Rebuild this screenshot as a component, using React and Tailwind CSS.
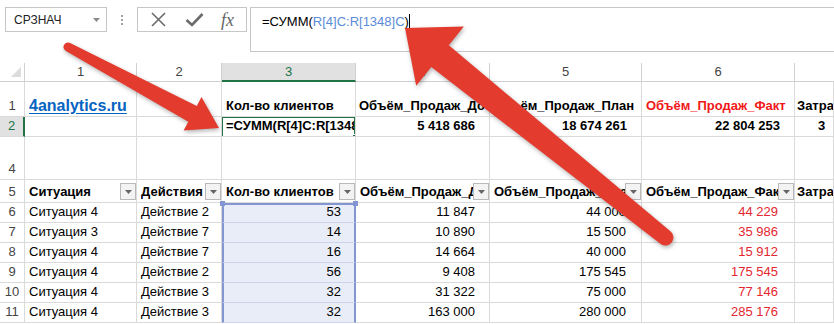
import React from 'react'

/* строки данных таблицы */
const ROWS = [
  ['6', 'Ситуация 4', 'Действие 2', '53', '11 847', '44 000', '44 229'],
  ['7', 'Ситуация 3', 'Действие 7', '14', '10 890', '15 500', '35 986'],
  ['8', 'Ситуация 4', 'Действие 7', '16', '14 664', '40 000', '15 912'],
  ['9', 'Ситуация 4', 'Действие 2', '56', '9 408', '175 545', '175 545'],
  ['10', 'Ситуация 4', 'Действие 3', '32', '31 322', '75 000', '77 146'],
  ['11', 'Ситуация 4', 'Действие 3', '32', '163 000', '280 000', '285 176'],
]

const cellBase = 'border-r border-b border-[#dadada] flex items-end overflow-hidden whitespace-nowrap min-w-0 leading-[18px] pb-px'

function Cell({ children, className = '' }) {
  return <div className={`${cellBase} ${className}`}>{children}</div>
}

function RowHead({ children, active = false }) {
  return (
    <div
      className={
        active
          ? 'border-b border-[#dadada] border-r-2 border-r-[#217346] bg-[#e1e1e1] text-[#217346] flex items-end justify-center leading-[18px] pb-px'
          : 'border-r border-b border-[#dadada] text-[#444] flex items-end justify-center leading-[18px] pb-px'
      }
    >
      {children}
    </div>
  )
}

function FilterButton() {
  return (
    <div className="w-[16px] h-[17px] mb-px shrink-0 border border-[#b9b9b9] bg-[#f3f3f3] flex items-center justify-center">
      <svg width="7" height="4" viewBox="0 0 7 4">
        <path d="M0 0 L7 0 L3.5 4 Z" fill="#666" />
      </svg>
    </div>
  )
}

function HeadCell({ children }) {
  return (
    <Cell className="font-bold pl-[4px]">
      <span className="flex-1 min-w-0 overflow-hidden">{children}</span>
      <FilterButton />
    </Cell>
  )
}

export default function App() {
  return (
    <div className="relative w-[834px] h-[324px] overflow-hidden bg-white font-['Liberation_Sans',Arial,sans-serif] text-[13px] text-black">

      {/* ── строка формул ── */}
      <div className="h-[63px] pt-[7px] flex items-start">
        <div className="ml-[5px] w-[102px] h-[25px] border border-[#c6c6c6] flex items-center justify-between pl-[8px] pr-[6px] text-[12px] text-[#222]">
          СРЗНАЧ
          <svg width="7" height="4" viewBox="0 0 7 4">
            <path d="M0 0 L7 0 L3.5 4 Z" fill="#8a8a8a" />
          </svg>
        </div>
        <div className="w-[30px] h-[25px] flex flex-col items-center justify-center gap-[2px]">
          <span className="w-[2px] h-[2px] bg-[#a0a0a0]" />
          <span className="w-[2px] h-[2px] bg-[#a0a0a0]" />
          <span className="w-[2px] h-[2px] bg-[#a0a0a0]" />
        </div>
        <div className="w-[110px] h-[25px] border border-[#c6c6c6] flex items-center">
          <svg className="ml-[13px]" width="15" height="15" viewBox="0 0 15 15">
            <path d="M1 1 L14 14 M14 1 L1 14" stroke="#6b6b6b" strokeWidth="1.6" />
          </svg>
          <svg className="ml-[19px]" width="19" height="15" viewBox="0 0 19 15">
            <path d="M1.5 8 L7 13 L17.5 2" stroke="#6b6b6b" strokeWidth="2.6" fill="none" />
          </svg>
          <span className="ml-[17px] font-['Liberation_Serif',serif] italic text-[18px] leading-none text-[#666]">fx</span>
        </div>
        <div className="ml-[3px] flex-1 h-[45px] border-t border-b border-l border-[#c6c6c6] pl-[11px] pt-[4px] leading-[20px] flex items-start">
          <span>=СУММ(</span>
          <span className="text-[#5b8bd6]">R[4]C:R[1348]C</span>
          <span>)</span>
          <span className="w-px h-[17px] bg-black mt-[2px]" />
        </div>
      </div>

      {/* ── сетка листа ── */}
      <div className="grid grid-cols-[25px_112px_85px_134px_134px_152px_153px_1fr] grid-rows-[19px_35px_20px_43px_23px_repeat(6,20px)]">

        {/* заголовки столбцов */}
        <div className="border-r border-b border-[#d0d0d0] flex items-end justify-end pr-[3px] pb-[4px]">
          <svg width="10" height="10" viewBox="0 0 10 10">
            <path d="M10 0 L10 10 L0 10 Z" fill="#dcdcdc" />
          </svg>
        </div>
        {['1', '2'].map((n) => (
          <div key={n} className="border-r border-b border-[#d0d0d0] text-[#444] flex items-center justify-center">{n}</div>
        ))}
        <div className="border-r border-[#d0d0d0] border-b-2 border-b-[#217346] bg-[#e1e1e1] text-[#217346] flex items-center justify-center">3</div>
        {['4', '5', '6'].map((n) => (
          <div key={n} className="border-r border-b border-[#d0d0d0] text-[#444] flex items-center justify-center">{n}</div>
        ))}
        <div className="border-b border-[#d0d0d0]" />

        {/* строка 1 */}
        <RowHead>1</RowHead>
        <Cell className="pl-[4px] pb-[3px]">
          <span className="text-[16px] font-bold text-[#0563c1] underline underline-offset-2">4analytics.ru</span>
        </Cell>
        <Cell />
        <Cell className="pl-[4px] font-bold">Кол-во клиентов</Cell>
        <Cell className="pl-[3px] font-bold">Объём_Продаж_До</Cell>
        <Cell className="pl-[3px] font-bold">Объём_Продаж_План</Cell>
        <Cell className="pl-[4px] font-bold text-[#f01818]">Объём_Продаж_Факт</Cell>
        <Cell className="pl-[2px] font-bold">Затраты</Cell>

        {/* строка 2 */}
        <RowHead active>2</RowHead>
        <Cell />
        <Cell />
        <div className={`${cellBase} relative pl-[4px] font-bold`}>
          =СУММ(R[4]C:R[1348]C)
          <div className="absolute -left-px -top-px -right-px -bottom-[2px] border-2 border-[#217346]" />
          <div className="absolute -right-[2px] -bottom-[3px] w-[5px] h-[5px] bg-[#217346] border border-white" />
        </div>
        <Cell className="justify-end pr-[14px] font-bold">5 418 686</Cell>
        <Cell className="justify-end pr-[14px] font-bold">18 674 261</Cell>
        <Cell className="justify-end pr-[14px] font-bold">22 804 253</Cell>
        <Cell className="pl-[23px] font-bold">3</Cell>

        {/* строка 4 (строка 3 скрыта) */}
        <RowHead>4</RowHead>
        <Cell />
        <Cell />
        <Cell />
        <Cell />
        <Cell />
        <Cell />
        <Cell />

        {/* строка 5 — шапка таблицы */}
        <RowHead>5</RowHead>
        <HeadCell>Ситуация</HeadCell>
        <HeadCell>Действия</HeadCell>
        <HeadCell>Кол-во клиентов</HeadCell>
        <HeadCell>Объём_Продаж_До</HeadCell>
        <HeadCell>Объём_Продаж_План</HeadCell>
        <HeadCell>Объём_Продаж_Факт</HeadCell>
        <Cell className="pl-[2px] font-bold">Затраты</Cell>

        {/* данные */}
        {ROWS.map((r, i) => (
          <React.Fragment key={r[0]}>
            <RowHead>{r[0]}</RowHead>
            <Cell className="pl-[4px]">{r[1]}</Cell>
            <Cell className="pl-[4px]">{r[2]}</Cell>
            <div
              className={`relative flex items-end justify-end pr-[13px] leading-[18px] pb-px bg-[#e8edf7] border-l-2 border-r-2 border-l-[#8396d2] border-r-[#8396d2] border-b border-b-[#ccd3ea] ${i === 0 ? 'border-t-2 border-t-[#8396d2]' : ''}`}
            >
              {r[3]}
              {i === 0 && (
                <>
                  <span className="absolute -left-[4px] -top-[4px] w-[5px] h-[5px] bg-[#8396d2]" />
                  <span className="absolute -right-[4px] -top-[4px] w-[5px] h-[5px] bg-[#8396d2]" />
                </>
              )}
            </div>
            <Cell className="justify-end pr-[14px]">{r[4]}</Cell>
            <Cell className="justify-end pr-[15px]">{r[5]}</Cell>
            <Cell className="justify-end pr-[16px] text-[#e3262f]">{r[6]}</Cell>
            <Cell />
          </React.Fragment>
        ))}
      </div>

      {/* ── красные стрелки поверх листа ── */}
      <svg
        className="absolute inset-0 pointer-events-none drop-shadow-[1px_2px_2px_rgba(0,0,0,0.3)]"
        width="834"
        height="324"
        viewBox="0 0 834 324"
      >
        <path
          d="M65.9 51 L188.3 121.8 L183.6 130.6 L219 128 L201.5 97.1 L196.8 105.9 L70.1 43 A4.5 4.5 0 0 0 65.9 51 Z"
          fill="#e33b2e"
        />
        <path
          d="M671 231.8 L448.8 45.3 L463.9 26.6 L405 28 L416.2 85.8 L431.3 67.1 L661 244.2 A8 8 0 0 0 671 231.8 Z"
          fill="#e33b2e"
        />
      </svg>
    </div>
  )
}
